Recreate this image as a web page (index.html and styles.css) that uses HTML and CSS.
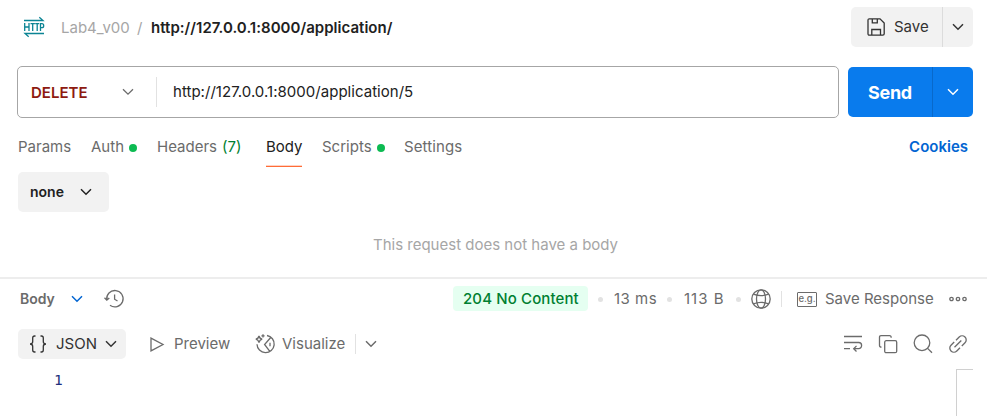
FILE: index.html
```html
<!DOCTYPE html>
<html lang="en">
<head>
<meta charset="utf-8">
<title>http://127.0.0.1:8000/application/</title>
<link rel="stylesheet" href="styles.css">
</head>
<body>
<svg class="defs" width="0" height="0">
  <symbol id="chevron" viewBox="0 0 12 8"><path d="M1 1.2 6 6.2 11 1.2"/></symbol>
</svg>
<header class="topbar">
  <svg class="icon http-icon" width="22" height="22" viewBox="0 0 22 22"><path d="M1 4.5H20L16.3 1.2M21 17.5H2L5.7 20.8M1.7 7v8M6 7v8M1.7 11H6M7.5 7.7h4.4M9.7 7.7V15M12.2 7.7h4M14.2 7.7V15M17.5 15V7.7h1.4a1.7 1.9 0 0 1 0 4h-1.4"/></svg>
  <span class="crumb">Lab4_v00</span><span class="slash">/</span><span class="title">http://127.0.0.1:8000/application/</span>
  <div class="save">
    <div class="save-main">
      <svg class="icon" width="18" height="18" viewBox="0 0 18 18"><path d="M1 2.2Q1 .8 2.4.8H13L17.2 5V15.800Q17.200 17.200 15.800 17.200H2.400Q1 17.200 1 15.800ZM5.300.8V4.800H10.300V.8M4.800 17V11.500H13.500V17"/></svg>
      <span>Save</span>
    </div>
    <div class="save-menu"><svg class="icon chev"><use href="#chevron"/></svg></div>
  </div>
</header>
<section class="request">
  <div class="url-box">
    <span class="method">DELETE</span>
    <svg class="icon chev"><use href="#chevron"/></svg>
    <span class="url">http://127.0.0.1:8000/application/5</span>
  </div>
  <div class="send">
    <span class="send-main">Send</span>
    <span class="send-menu"><svg class="icon chev"><use href="#chevron"/></svg></span>
  </div>
</section>
<nav class="tabs">
  <span class="tab params">Params</span>
  <span class="tab auth">Auth<i class="dot"></i></span>
  <span class="tab headers">Headers <b>(7)</b></span>
  <span class="tab body-tab">Body</span>
  <span class="tab scripts">Scripts<i class="dot"></i></span>
  <span class="tab settings">Settings</span>
  <span class="cookies">Cookies</span>
</nav>
<div class="body-type"><span>none</span><svg class="icon chev"><use href="#chevron"/></svg></div>
<p class="empty"><span>This request does not have a body</span></p>
<section class="response">
  <div class="status-row">
    <span class="resp-body">Body</span>
    <svg class="icon chev blue"><use href="#chevron"/></svg>
    <svg class="icon history" width="20" height="20" viewBox="0 0 20 20"><path d="M2.800 11A8.200 8.200 0 1 1 6 16.300M.5 8.700 2.800 11.200 5.300 8.900M10.600 5.500V10.200L13.500 12"/></svg>
    <span class="status"><span>204 No Content</span></span>
    <i class="sep"></i><span class="time">13 ms</span>
    <i class="sep"></i><span class="size">113 B</span>
    <i class="sep"></i>
    <svg class="icon globe" width="20" height="20" viewBox="0 0 20 20"><circle cx="10" cy="10" r="9.200"/><ellipse cx="10" cy="10" rx="4.500" ry="9.200"/><path d="M2.400 5.200Q10 8.200 17.600 5.200M2.400 14.800Q10 11.800 17.600 14.800"/></svg>
    <i class="rule"></i>
    <span class="eg">e.g.</span>
    <span class="save-response">Save Response</span>
    <svg class="icon more" width="18" height="6" viewBox="0 0 18 6"><circle cx="2.500" cy="3" r="1.700"/><circle cx="9" cy="3" r="1.700"/><circle cx="15.500" cy="3" r="1.700"/></svg>
  </div>
  <div class="view-row">
    <div class="format">
      <svg class="icon braces" width="18" height="18" viewBox="0 0 18 18"><path d="M6.500 1H5.600Q3.700 1 3.700 3V6.500Q3.700 9 1 9Q3.700 9 3.700 11.500V15Q3.700 17 5.600 17H6.500M11.500 1H12.400Q14.300 1 14.300 3V6.500Q14.300 9 17 9Q14.300 9 14.300 11.500V15Q14.300 17 12.400 17H11.500"/></svg>
      <span>JSON</span><svg class="icon chev"><use href="#chevron"/></svg>
    </div>
    <svg class="icon play" width="14" height="15" viewBox="0 0 14 15"><path d="M1 1.200 13 7.500 1 13.800Z"/></svg>
    <span class="preview">Preview</span>
    <svg class="icon vis" width="20" height="20" viewBox="0 0 20 20"><path d="M4 2Q4.600 4.800 7.200 5.200Q4.600 5.800 4 8.500Q3.400 5.800.8 5.200Q3.400 4.800 4 2ZM8 .2V3.400M6.400 1.800H9.600M12 1.500A8.600 8.600 0 1 1 2 10.200M15.500 3.800 9.600 10.500 14.800 17.300M15 8.800V12.300"/></svg>
    <span class="visualize">Visualize</span>
    <i class="rule"></i>
    <svg class="icon chev"><use href="#chevron"/></svg>
    <div class="tools">
      <svg class="icon" width="20" height="20" viewBox="0 0 20 20"><path d="M1 2.500H19M1 8.500H15.700A2.900 3.100 0 0 1 15.700 14.700H11M13.500 11.900 10.700 14.700 13.500 17.500M1 14.700H7"/></svg>
      <svg class="icon" width="20" height="20" viewBox="0 0 20 20"><rect x="6.700" y="6.700" width="12" height="12" rx="1.500"/><path d="M3.500 13.200Q1.500 13.200 1.500 11.500V3.200Q1.500 1.700 3 1.700H11.500Q13.200 1.700 13.200 3.800"/></svg>
      <svg class="icon" width="20" height="20" viewBox="0 0 20 20"><circle cx="9" cy="8.800" r="7.800"/><path d="M14.600 14.400 19 18.800"/></svg>
      <svg class="icon" width="20" height="20" viewBox="0 0 20 20"><path d="M6.500 13.300 13.300 6.500M8 6.200 11.200 3A4 4 0 0 1 17 8.800L13.800 12M12 13.800 8.800 17A4 4 0 0 1 3 11.200L6.200 8"/></svg>
    </div>
  </div>
  <div class="editor"><span class="line-no">1</span><div class="minimap"></div></div>
</section>
</body>
</html>
```

FILE: styles.css
```css
* { box-sizing: border-box; }
body { margin: 0; width: 987px; height: 416px; overflow: hidden; background: #fff; color: #6b6b6b; font: 15px/20px Inter, sans-serif; white-space: nowrap; }
.defs { display: block; position: absolute; }
.icon { fill: none; stroke: currentColor; stroke-width: 1.3; flex: none; overflow: visible; }
.chev { width: 12px; height: 8px; stroke-width: 1.5; }
.topbar { height: 54px; display: flex; align-items: center; padding: 0 14px 0 23px; }
.http-icon { color: #0b8494; }
.crumb { width: 76px; margin: 2px 0 0 16px; color: #a6a6a6; }
.slash { width: 14px; margin-top: 2px; color: #a6a6a6; }
.title { margin-top: 2px; color: #212121; font-weight: 600; letter-spacing: .03px; }
.save { display: flex; width: 122px; height: 40px; margin-left: auto; border-radius: 5px; background: #f2f2f2; color: #333; }
.save-main { width: 92px; padding-left: 16px; display: flex; align-items: center; gap: 9px; border-right: 1px solid #dcdcdc; }
.save-menu { flex: 1; display: grid; place-items: center; }
.request { display: flex; gap: 9px; height: 52px; margin: 12px 14px 0 17px; align-items: center; }
.url-box { width: 822px; height: 52px; border: 1px solid #a6a6a6; border-radius: 5px; display: flex; align-items: center; padding-left: 13px; }
.method { width: 91px; padding-top: 1px; color: #8e1a10; font-weight: 600; }
.url-box .chev { margin-right: 16px; stroke-width: 1.3; }
.url { height: 30px; line-height: 30px; margin-left: 6px; padding-left: 16px; border-left: 1px solid #e2e2e2; color: #212121; letter-spacing: .03px; }
.send { display: flex; width: 125px; height: 50px; border-radius: 5px; background: #097bed; color: #fff; font-size: 18px; font-weight: 700; letter-spacing: -.3px; }
.send-main { width: 85px; padding-left: 20px; line-height: 51px; border-right: 1px solid #0869cb; }
.send-menu { flex: 1; display: grid; place-items: center; }
.tabs { display: flex; height: 38px; margin: 11px 19px 0 18px; line-height: 36px; }
.tab { display: flex; align-items: center; height: 38px; padding-bottom: 2px; }
.tab b { color: #007f31; font-weight: 400; margin-left: 5px; }
.params { width: 73px; }
.auth { width: 66px; }
.headers { width: 109px; }
.body-tab { width: 36px; margin-right: 20px; color: #212121; box-shadow: inset 0 -1px #ff6c37, inset 0 -2px #ffd3c3; }
.scripts { width: 82px; }
.settings { letter-spacing: .12px; }
.dot { width: 8px; height: 8px; border-radius: 50%; margin: 1px 0 0 5px; background: #0cbb52; }
.cookies { margin-left: auto; color: #0265d2; font-weight: 600; }
.body-type { width: 91px; height: 40px; margin: 5px 0 0 18px; padding: 0 17px 0 12px; border-radius: 5px; background: #f2f2f2; color: #212121; font-size: 14px; font-weight: 600; display: flex; align-items: center; justify-content: space-between; }
.empty { height: 65px; margin: 0; padding: 23px 0 0 4px; text-align: center; color: #a6a6a6; }
.response { border-top: 2px solid #ededed; }
.status-row { height: 40px; display: flex; align-items: center; padding-left: 20px; }
.resp-body { width: 51px; font-size: 14px; font-weight: 600; }
.blue { color: #0265d2; margin-right: 21px; }
.status { width: 135px; height: 25px; margin: -1px 0 0 329px; padding-left: 10px; line-height: 25px; background: #e5fff1; color: #007f31; font-weight: 500; border-radius: 4px; letter-spacing: .12px; }
.sep { width: 5px; height: 5px; border-radius: 50%; background: #e2e2e2; margin: 0 11px 0 10px; }
.time { width: 43px; letter-spacing: .5px; }
.size { width: 43px; padding-left: 1px; letter-spacing: 1px; }
.globe { margin-left: -1px; }
.rule { width: 1px; height: 16px; background: #e2e2e2; }
.status-row .rule { margin: 0 15px 0 10px; }
.eg { width: 20px; height: 15px; border: 1px solid #6b6b6b; border-radius: 1px; font-size: 9.5px; line-height: 11px; text-align: center; font-weight: 500; }
.save-response { width: 124px; margin-left: 8px; }
.view-row { height: 50px; display: flex; align-items: center; padding: 0 19px 0 18px; }
.format { width: 108px; height: 30px; border-radius: 5px; background: #f2f2f2; color: #333; display: flex; align-items: center; padding-left: 11px; }
.format span { width: 49px; margin-left: 9px; }
.play { margin: 0 10px 0 24px; }
.preview { width: 81px; }
.visualize { width: 73px; margin-left: 7px; }
.view-row .rule { height: 20px; margin-right: 9px; }
.tools { display: flex; gap: 15px; margin-left: auto; }
.editor { display: flex; justify-content: space-between; height: 47px; padding-right: 14px; }
.line-no { margin-left: 54px; padding-top: 1px; color: #212f7c; font-family: "DejaVu Sans Mono", monospace; font-size: 14.5px; }
.minimap { width: 17px; border: solid #d0d0d0; border-width: 1px 0 0 1px; }
```
